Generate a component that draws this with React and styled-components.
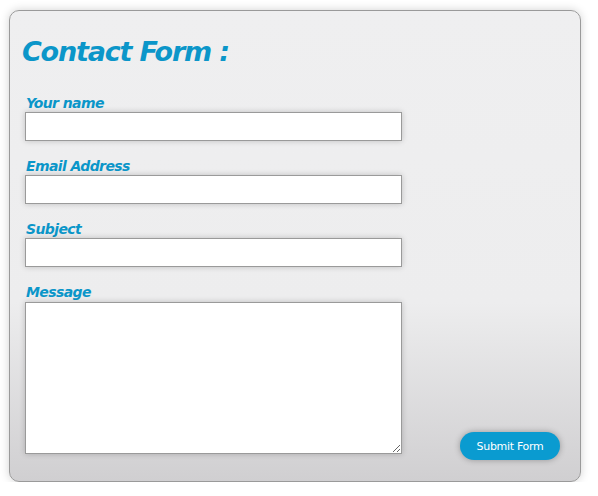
import styled, { createGlobalStyle } from "styled-components";

const GlobalStyle = createGlobalStyle`
  body {
    margin: 0;
    background: #ffffff;
    font-family: "DejaVu Sans", Verdana, sans-serif;
  }
`;

export default function App() {
  return (
    <>
      <GlobalStyle />
      <Page>
        <Panel>
          <Title>Contact Form :</Title>
          <Body>
            <Fields>
              <Field>
                <Label>Your name</Label>
                <Input type="text" />
              </Field>
              <Field>
                <Label>Email Address</Label>
                <Input type="text" />
              </Field>
              <Field>
                <Label>Subject</Label>
                <Input type="text" />
              </Field>
              <Field>
                <Label>Message</Label>
                <TextArea />
              </Field>
            </Fields>
            <SubmitButton type="button">Submit Form</SubmitButton>
          </Body>
        </Panel>
      </Page>
    </>
  );
}

const Page = styled.div`
  padding: 10px 0 0 9px;
`;

const Panel = styled.div`
  box-sizing: border-box;
  width: 572px;
  height: 472px;
  padding: 0 20px 0 15px;
  border: 1px solid #9a9a9a;
  border-radius: 10px;
  background: linear-gradient(to bottom, #efeff0 0%, #ededee 62%, #d0cfd1 100%);
  box-shadow: 0 0 10px rgba(0, 0, 0, 0.18);
  display: flex;
  flex-direction: column;
`;

const Title = styled.h1`
  margin: 24px 0 0 -3px;
  font-family: "DejaVu Sans", Verdana, sans-serif;
  font-size: 27px;
  font-weight: bold;
  font-style: italic;
  letter-spacing: -1.2px;
  line-height: 34px;
  color: #0b96c9;
`;

const Body = styled.div`
  flex: 1;
  display: flex;
  justify-content: space-between;
  align-items: flex-start;
  padding-bottom: 21px;
  margin-top: 25px;
`;

const Fields = styled.div`
  display: flex;
  flex-direction: column;
  gap: 16px;
  width: 377px;
`;

const Field = styled.div`
  display: flex;
  flex-direction: column;
`;

const Label = styled.label`
  font-family: "DejaVu Sans", Verdana, sans-serif;
  font-size: 14px;
  font-weight: bold;
  font-style: italic;
  letter-spacing: -0.6px;
  line-height: 18px;
  color: #0b96c9;
  padding-left: 1px;
`;

const Input = styled.input`
  box-sizing: border-box;
  width: 377px;
  height: 29px;
  margin: 0;
  border: 1px solid #9a9a9a;
  background: #ffffff;
  box-shadow: 0 0 6px rgba(0, 0, 0, 0.2);
  outline: none;
`;

const TextArea = styled.textarea`
  box-sizing: border-box;
  width: 377px;
  height: 152px;
  margin: 1px 0 0;
  border: 1px solid #9a9a9a;
  background: #ffffff;
  box-shadow: 0 0 6px rgba(0, 0, 0, 0.2);
  resize: both;
  outline: none;
  display: block;
`;

const SubmitButton = styled.button`
  align-self: flex-end;
  width: 100px;
  height: 28px;
  margin: 0;
  border: none;
  border-radius: 14px;
  background: #0a9bd0;
  color: #ffffff;
  font-family: "DejaVu Sans", Verdana, sans-serif;
  font-size: 11px;
  letter-spacing: -0.3px;
  box-shadow: 0 0 6px rgba(0, 0, 0, 0.3);
  cursor: pointer;
`;
